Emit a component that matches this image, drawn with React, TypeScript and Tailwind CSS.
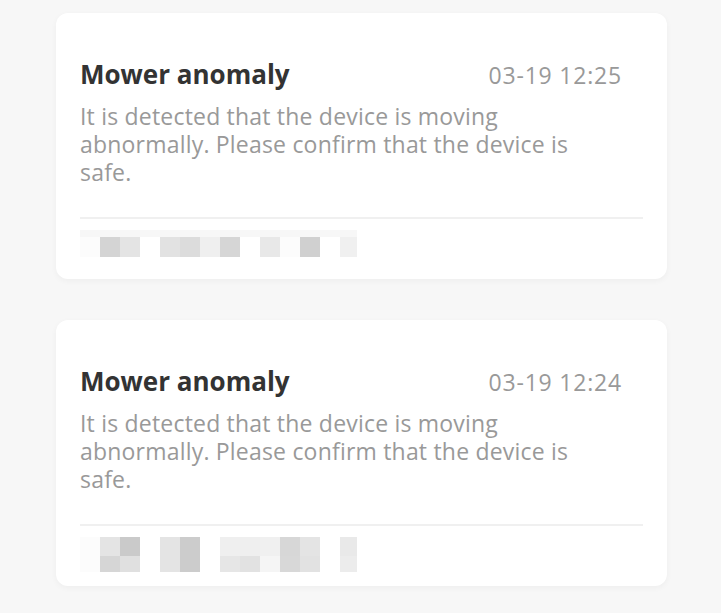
const blocksA: string[][] = [
  ["#fcfcfc", "#d4d4d4", "#e4e4e4", "#ffffff", "#e2e2e2", "#dcdcdc", "#efefef", "#d6d6d6", "#ffffff", "#e8e8e8", "#fcfcfc", "#d0d0d0", "#ffffff", "#f0f0f0"],
];

const blocksB: string[][] = [
  ["#fcfcfc", "#e4e4e4", "#cacaca", "#ffffff", "#e4e4e4", "#cccccc", "#ffffff", "#efefef", "#efefef", "#f0f0f0", "#d7d7d7", "#e4e4e4", "#ffffff", "#e9e9e9"],
  ["#fcfcfc", "#d6d6d6", "#e0e0e0", "#ffffff", "#e4e4e4", "#cccccc", "#ffffff", "#e6e6e6", "#e2e2e2", "#f5f5f5", "#d8d8d8", "#e2e2e2", "#ffffff", "#ececec"],
];

function Mosaic({ rows, strip }: { rows: string[][]; strip?: boolean }) {
  return (
    <div className="flex flex-col">
      {strip && <div className="h-[7px] w-[277px] bg-[#f7f7f7]" />}
      {rows.map((row, r) => (
        <div key={r} className="flex">
          {row.map((c, i) => (
            <div
              key={i}
              className={`${i === row.length - 1 ? "w-[17px]" : "w-[20px]"} ${rows.length > 1 ? (r === 0 ? "h-[19px]" : "h-[16px]") : "h-[20px]"}`}
              style={{ backgroundColor: c }}
            />
          ))}
        </div>
      ))}
    </div>
  );
}

function Card({ time, rows, strip }: { time: string; rows: string[][]; strip?: boolean }) {
  return (
    <div className="w-[611px] rounded-[12px] bg-white shadow-[0_2px_6px_rgba(0,0,0,0.04)]">
      <div className="px-6 pt-[44px]">
        <div className="flex items-baseline justify-between">
          <h2 className="text-[26px] leading-[34px] font-bold text-[#333333]">Mower anomaly</h2>
          <span className="mr-[21px] text-[23px] leading-[34px] tracking-[0.8px] text-[#999999]">{time}</span>
        </div>
        <p className="mt-[10px] pr-10 text-[23px] leading-[28px] tracking-[0.2px] text-[#999999]">
          It is detected that the device is moving abnormally. Please confirm that the device is safe.
        </p>
        <div className="mt-[31px] h-[2px] bg-[#f0f0f0]" />
        <div className="h-[60px] pt-[11px]">
          <Mosaic rows={rows} strip={strip} />
        </div>
      </div>
    </div>
  );
}

export default function App() {
  return (
    <div
      className="min-h-screen bg-[#f7f7f7] pt-[13px] pl-[56px]"
      style={{ fontFamily: '"Open Sans", "Noto Sans", sans-serif' }}
    >
      <div className="flex flex-col gap-[41px]">
        <Card time="03-19 12:25" rows={blocksA} strip />
        <Card time="03-19 12:24" rows={blocksB} />
      </div>
    </div>
  );
}
